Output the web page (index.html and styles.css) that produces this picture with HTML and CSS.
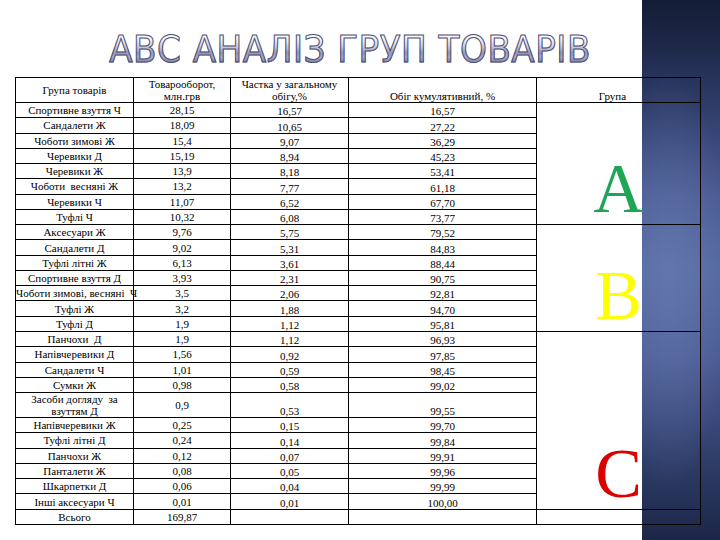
FILE: index.html
```html
<!DOCTYPE html>
<html lang="uk">
<head>
<meta charset="utf-8">
<title>АВС аналіз груп товарів</title>
<link rel="stylesheet" href="styles.css">
</head>
<body>
<div class="slide">
  <h1 class="title">АВС АНАЛІЗ ГРУП ТОВАРІВ</h1>
  <table class="abc">
    <colgroup>
      <col class="c1"><col class="c2"><col class="c3"><col class="c4"><col class="c5">
    </colgroup>
    <thead>
      <tr class="head">
        <th class="mid">Група товарів</th>
        <th class="mid">Товарооборот,<br>млн.грв</th>
        <th class="mid">Частка у загальному<br>обігу,%</th>
        <th class="bot">Обіг кумулятивний, %</th>
        <th class="bot grp-head">Група</th>
      </tr>
    </thead>
    <tbody>
      <tr><td>Спортивне взуття Ч</td><td>28,15</td><td class="bot">16,57</td><td class="bot">16,57</td><td class="grp" rowspan="8"><div class="letter a">A</div></td></tr>
      <tr><td>Сандалети Ж</td><td>18,09</td><td class="bot">10,65</td><td class="bot">27,22</td></tr>
      <tr><td>Чоботи зимові Ж</td><td>15,4</td><td class="bot">9,07</td><td class="bot">36,29</td></tr>
      <tr><td>Черевики Д</td><td>15,19</td><td class="bot">8,94</td><td class="bot">45,23</td></tr>
      <tr><td>Черевики Ж</td><td>13,9</td><td class="bot">8,18</td><td class="bot">53,41</td></tr>
      <tr><td>Чоботи&nbsp; весняні Ж</td><td>13,2</td><td class="bot">7,77</td><td class="bot">61,18</td></tr>
      <tr><td>Черевики Ч</td><td>11,07</td><td class="bot">6,52</td><td class="bot">67,70</td></tr>
      <tr><td>Туфлі Ч</td><td>10,32</td><td class="bot">6,08</td><td class="bot">73,77</td></tr>
      <tr><td>Аксесуари Ж</td><td>9,76</td><td class="bot">5,75</td><td class="bot">79,52</td><td class="grp" rowspan="7"><div class="letter b">B</div></td></tr>
      <tr><td>Сандалети Д</td><td>9,02</td><td class="bot">5,31</td><td class="bot">84,83</td></tr>
      <tr><td>Туфлі літні Ж</td><td>6,13</td><td class="bot">3,61</td><td class="bot">88,44</td></tr>
      <tr><td>Спортивне взуття Д</td><td>3,93</td><td class="bot">2,31</td><td class="bot">90,75</td></tr>
      <tr><td>Чоботи зимові, весняні&nbsp; Ч</td><td>3,5</td><td class="bot">2,06</td><td class="bot">92,81</td></tr>
      <tr><td>Туфлі Ж</td><td>3,2</td><td class="bot">1,88</td><td class="bot">94,70</td></tr>
      <tr><td>Туфлі Д</td><td>1,9</td><td class="bot">1,12</td><td class="bot">95,81</td></tr>
      <tr><td>Панчохи&nbsp; Д</td><td>1,9</td><td class="bot">1,12</td><td class="bot">96,93</td><td class="grp" rowspan="11"><div class="letter c">C</div></td></tr>
      <tr><td>Напівчеревики Д</td><td>1,56</td><td class="bot">0,92</td><td class="bot">97,85</td></tr>
      <tr><td>Сандалети Ч</td><td>1,01</td><td class="bot">0,59</td><td class="bot">98,45</td></tr>
      <tr><td>Сумки Ж</td><td>0,98</td><td class="bot">0,58</td><td class="bot">99,02</td></tr>
      <tr class="tall"><td>Засоби догляду&nbsp; за<br>взуттям Д</td><td>0,9</td><td class="bot">0,53</td><td class="bot">99,55</td></tr>
      <tr><td>Напівчеревики Ж</td><td>0,25</td><td class="bot">0,15</td><td class="bot">99,70</td></tr>
      <tr><td>Туфлі літні Д</td><td>0,24</td><td class="bot">0,14</td><td class="bot">99,84</td></tr>
      <tr><td>Панчохи Ж</td><td>0,12</td><td class="bot">0,07</td><td class="bot">99,91</td></tr>
      <tr><td>Панталети Ж</td><td>0,08</td><td class="bot">0,05</td><td class="bot">99,96</td></tr>
      <tr><td>Шкарпетки Д</td><td>0,06</td><td class="bot">0,04</td><td class="bot">99,99</td></tr>
      <tr><td>Інші аксесуари Ч</td><td>0,01</td><td class="bot">0,01</td><td class="bot">100,00</td></tr>
      <tr><td>Всього</td><td>169,87</td><td></td><td></td><td></td></tr>
    </tbody>
  </table>
</div>
</body>
</html>
```

FILE: styles.css
```css
html, body {
  margin: 0;
  padding: 0;
}

body {
  width: 720px;
  height: 540px;
  overflow: hidden;
  background-color: #ffffff;
  background-image:
    radial-gradient(ellipse 60px 210px at 35% 52%, rgba(112, 130, 186, 0.5), rgba(112, 130, 186, 0) 100%),
    linear-gradient(180deg, #141c35 0%, #1d2848 8%, #2f3d69 20%, #4a5b93 36%, #566aa2 50%, #4b5c94 66%, #33426f 82%, #1b2647 100%);
  background-size: 78px 100%, 78px 100%;
  background-position: right top, right top;
  background-repeat: no-repeat, no-repeat;
}

.slide {
  width: 720px;
  height: 540px;
  display: flex;
  flex-direction: column;
}

.title {
  margin: 0;
  box-sizing: border-box;
  height: 77px;
  width: 700px;
  padding-top: 30px;
  text-align: center;
  font-family: "Liberation Sans Narrow", "DejaVu Sans Condensed", "Liberation Sans", sans-serif;
  font-weight: normal;
  font-size: 38px;
  line-height: 1;
  letter-spacing: 0.5px;
  color: transparent;
  background-image: linear-gradient(180deg, #ffffff 0px, #ffffff 34px, #f0f0f8 40px, #cacae2 47px, #9696bc 53px, #ababcc 57px, #7c7ca2 63px);
  -webkit-background-clip: text;
  background-clip: text;
  -webkit-text-stroke: 1px #505070;
}

.abc {
  margin-left: 15px;
  width: 685px;
  table-layout: fixed;
  border-collapse: collapse;
  font-family: "Liberation Serif", "DejaVu Serif", serif;
  font-size: 11px;
  color: #000;
}

.c1 { width: 118px; }
.c2 { width: 97px; }
.c3 { width: 118px; }
.c4 { width: 188px; }
.c5 { width: 164px; }

.abc th,
.abc td {
  border: 1px solid #000;
  padding: 0;
  text-align: center;
  vertical-align: middle;
  font-weight: normal;
  line-height: 12px;
  white-space: nowrap;
  overflow: visible;
}

.abc tbody tr { height: 15.28px; }
.abc .head { height: 25px; }
.abc .tall { height: 25px; }

.abc .bot { vertical-align: bottom; }
.abc .grp-head { padding-right: 12px; }

.abc .grp {
  vertical-align: bottom;
  padding: 0;
}

.letter {
  font-family: "Liberation Serif", "DejaVu Serif", serif;
  font-size: 70px;
  line-height: 1;
  text-align: center;
  clip-path: inset(-30px 57px -30px 0);
}

.letter.a { color: #1ea556; }
.letter.b { color: #ffff00; }
.letter.c { color: #dd0000; }
```
